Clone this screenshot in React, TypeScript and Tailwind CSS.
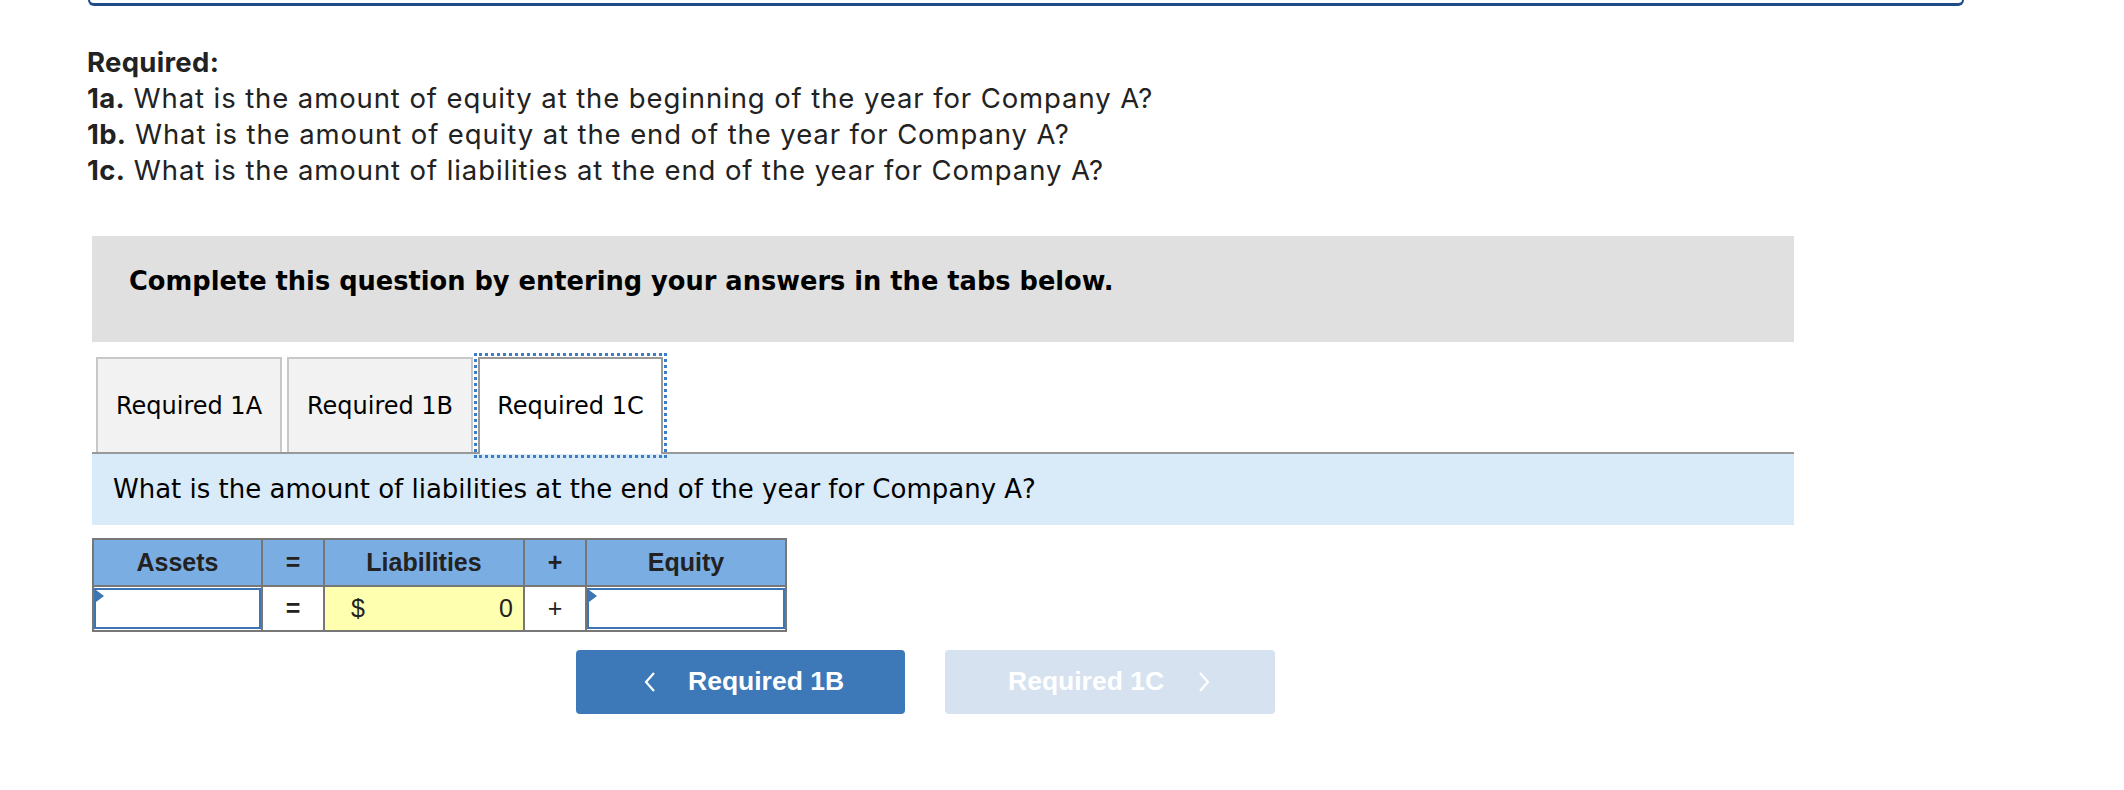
import React from 'react';

const tabs = ['Required 1A', 'Required 1B', 'Required 1C'];

function InputCell({ width }: { width: string }) {
  return (
    <td className={`${width} h-[45px] border-2 border-[#777] p-0 bg-white`}>
      <div className="relative h-[41px] border-2 border-[#3c74b4] bg-white">
        <span className="absolute left-0 top-0 h-0 w-0 border-y-[6px] border-l-[8px] border-y-transparent border-l-[#3c74b4]" />
      </div>
    </td>
  );
}

export default function App() {
  const proxima = { fontFamily: 'Inter, "Open Sans", sans-serif' };
  return (
    <div className="min-h-[790px] w-[2124px] bg-white text-[#222]">
      {/* bottom edge of the box above */}
      <div className="ml-[88px] h-[6px] w-[1876px] rounded-b-[10px] border-x-2 border-b-[3px] border-[#1f4b86]" />

      <div className="ml-[87px] mt-[38px] text-[27.5px] leading-[36px] tracking-[0.9px]" style={proxima}>
        <div className="font-bold tracking-[0.3px]">Required:</div>
        <div><span className="font-bold tracking-[0.3px]">1a.</span> What is the amount of equity at the beginning of the year for Company A?</div>
        <div><span className="font-bold tracking-[0.3px]">1b.</span> What is the amount of equity at the end of the year for Company A?</div>
        <div><span className="font-bold tracking-[0.3px]">1c.</span> What is the amount of liabilities at the end of the year for Company A?</div>
      </div>

      <div className="ml-[92px] mt-[48px] w-[1702px]" style={{ fontFamily: '"DejaVu Sans", Verdana, sans-serif' }}>
        <div className="h-[106px] bg-[#e0e0e0] pl-[37px] pt-[30px]">
          <p className="text-[25.7px] font-bold leading-[30px] text-black">
            Complete this question by entering your answers in the tabs below.
          </p>
        </div>

        <div className="mt-[15px] flex items-end gap-[5px] border-b-2 border-[#999] pl-[4px]">
          {tabs.map((t, i) =>
            i === 2 ? (
              <div
                key={t}
                className="relative -mb-[2px] flex h-[97px] w-[185px] items-center justify-center border-x-2 border-t-2 border-[#999] bg-white pb-[2px] text-[24px] text-black outline-dotted outline-[3px] outline-offset-[1px] outline-[#3d7cc9]"
              >
                {t}
              </div>
            ) : (
              <div
                key={t}
                className="flex h-[95px] w-[186px] items-center justify-center border-x-2 border-t-2 border-[#c8c8c8] bg-[#f2f2f2] text-[24px] text-black"
              >
                {t}
              </div>
            )
          )}
        </div>

        <div className="flex h-[71px] items-center bg-[#d9eaf9] pl-[21px] text-[26px] text-black">
          What is the amount of liabilities at the end of the year for Company A?
        </div>

        <table
          className="mt-[13px] border-collapse text-[25px] text-[#222]"
          style={{ fontFamily: '"Liberation Sans", Arial, sans-serif' }}
        >
          <thead>
            <tr className="h-[47px] bg-[#7aade2] font-bold">
              <th className="w-[169px] border-2 border-[#777]">Assets</th>
              <th className="w-[62px] border-2 border-[#777]">=</th>
              <th className="w-[200px] border-2 border-[#777]">Liabilities</th>
              <th className="w-[62px] border-2 border-[#777]">+</th>
              <th className="w-[200px] border-2 border-[#777]">Equity</th>
            </tr>
          </thead>
          <tbody>
            <tr>
              <InputCell width="w-[169px]" />
              <td className="w-[62px] border-2 border-[#777] bg-white text-center font-bold">=</td>
              <td className="w-[200px] border-2 border-[#777] bg-[#ffffb0] px-[10px]">
                <div className="flex justify-between">
                  <span className="pl-[16px]">$</span>
                  <span>0</span>
                </div>
              </td>
              <td className="w-[62px] border-2 border-[#777] bg-white text-center">+</td>
              <InputCell width="w-[200px]" />
            </tr>
          </tbody>
        </table>

        <div className="ml-[484px] mt-[18px] flex gap-[40px]" style={{ fontFamily: '"Liberation Sans", Arial, sans-serif' }}>
          <button className="flex h-[64px] w-[329px] items-center rounded-[4px] bg-[#3d78b8] pl-[67px] text-[26.5px] font-bold text-white">
            <svg width="14" height="22" viewBox="0 0 14 22" className="mr-[31px]">
              <path d="M11 2 L3 11 L11 20" fill="none" stroke="white" strokeWidth="2.2" />
            </svg>
            Required 1B
          </button>
          <button className="flex h-[64px] w-[330px] items-center rounded-[4px] bg-[#d6e2f0] pl-[63px] text-[26.5px] font-bold text-white">
            Required 1C
            <svg width="14" height="22" viewBox="0 0 14 22" className="ml-[33px]">
              <path d="M3 2 L11 11 L3 20" fill="none" stroke="white" strokeWidth="2.2" />
            </svg>
          </button>
        </div>
      </div>
    </div>
  );
}
